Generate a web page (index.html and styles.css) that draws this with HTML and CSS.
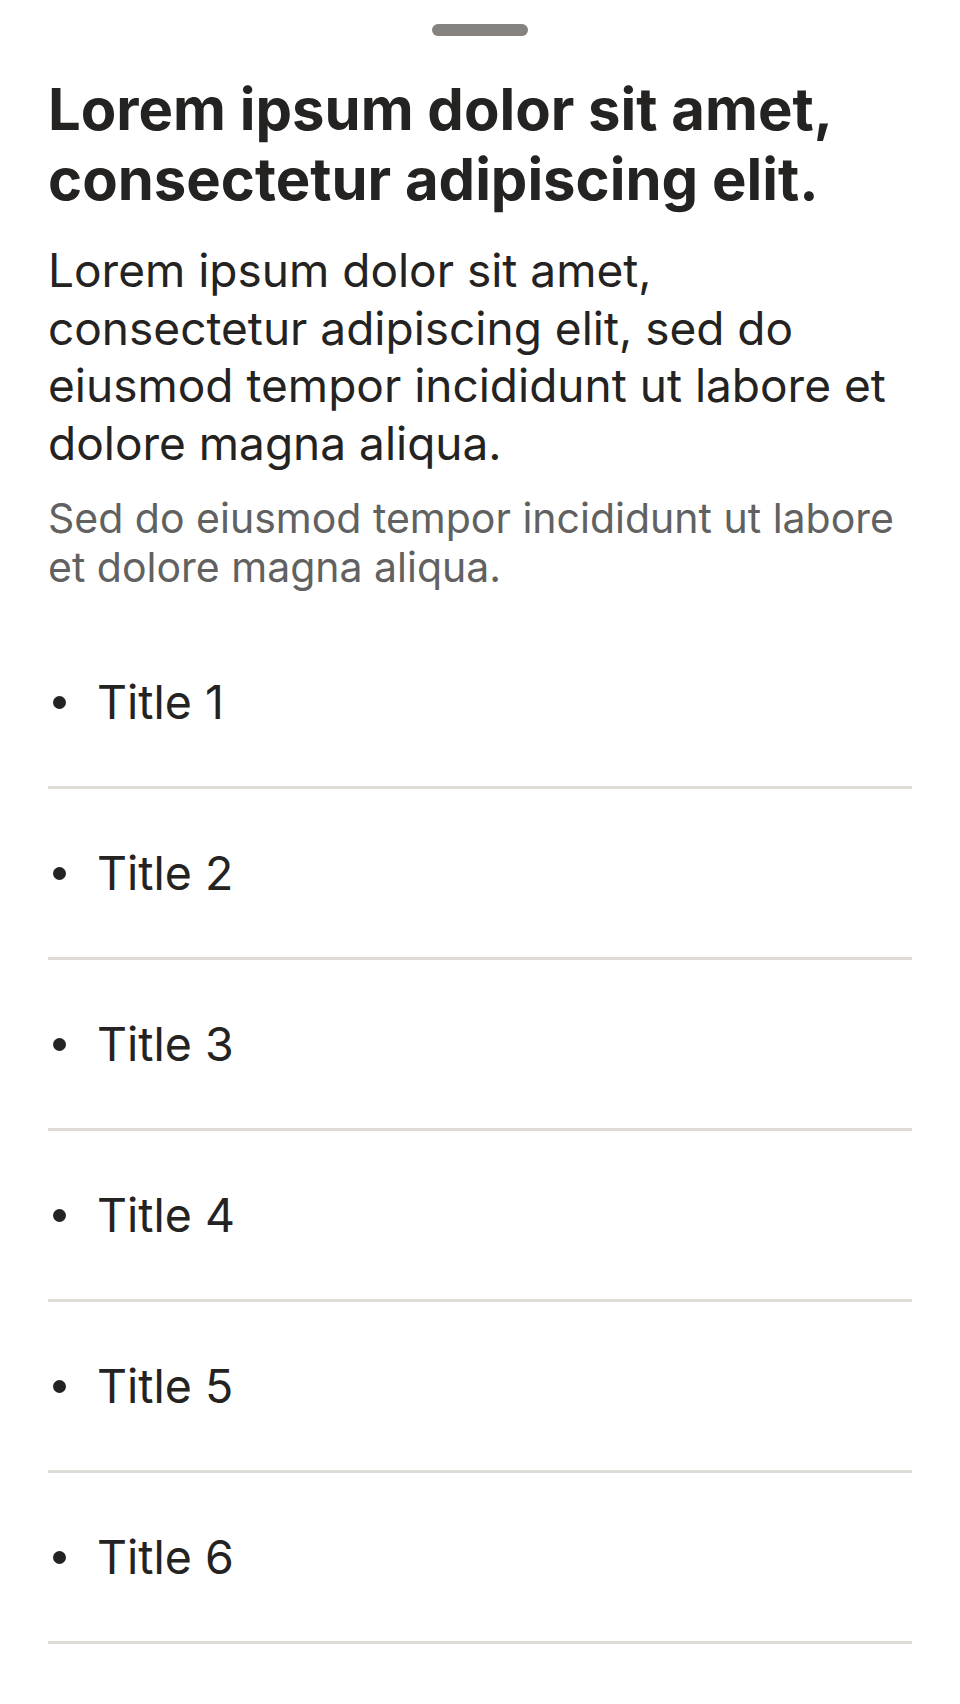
FILE: index.html
```html
<!DOCTYPE html>
<html lang="en">
<head>
<meta charset="utf-8">
<title>Sheet</title>
<link rel="stylesheet" href="styles.css">
</head>
<body>
<div class="sheet">
  <div class="grabber"></div>
  <h1 class="title">Lorem ipsum dolor sit amet, consectetur adipiscing elit.</h1>
  <p class="body">Lorem ipsum dolor sit amet, consectetur adipiscing elit, sed do eiusmod tempor incididunt ut labore et dolore magna aliqua.</p>
  <p class="note">Sed do eiusmod tempor incididunt ut labore et dolore magna aliqua.</p>
  <ul class="list">
    <li class="row"><span class="dot"></span><span class="label">Title 1</span></li>
    <li class="row"><span class="dot"></span><span class="label">Title 2</span></li>
    <li class="row"><span class="dot"></span><span class="label">Title 3</span></li>
    <li class="row"><span class="dot"></span><span class="label">Title 4</span></li>
    <li class="row"><span class="dot"></span><span class="label">Title 5</span></li>
    <li class="row"><span class="dot"></span><span class="label">Title 6</span></li>
  </ul>
</div>
</body>
</html>
```
FILE: styles.css
```css
html, body {
  margin: 0;
  padding: 0;
  background: #ffffff;
}
body {
  font-family: Inter, "Noto Sans", sans-serif;
  color: #252321;
}
.sheet {
  display: flex;
  flex-direction: column;
  padding: 24px 48px 0;
}
.grabber {
  align-self: center;
  width: 96px;
  height: 12px;
  border-radius: 6px;
  background: #85827f;
}
.title {
  margin: 38px 0 0;
  font-size: 58px;
  line-height: 70px;
  font-weight: 700;
}
.body {
  margin: 28px 0 0;
  font-size: 46px;
  line-height: 57.5px;
  font-weight: 400;
}
.note {
  margin: 22px 0 0;
  font-size: 41px;
  line-height: 48.5px;
  color: #616161;
}
.list {
  list-style: none;
  margin: 27px 0 0;
  padding: 0;
}
.row {
  display: flex;
  align-items: center;
  height: 168px;
  border-bottom: 3px solid #dfdcd7;
}
.dot {
  width: 13px;
  height: 13px;
  border-radius: 50%;
  background: #252321;
  margin: 0 31px 0 5px;
}
.label {
  font-size: 46.5px;
  line-height: 58px;
}
```
